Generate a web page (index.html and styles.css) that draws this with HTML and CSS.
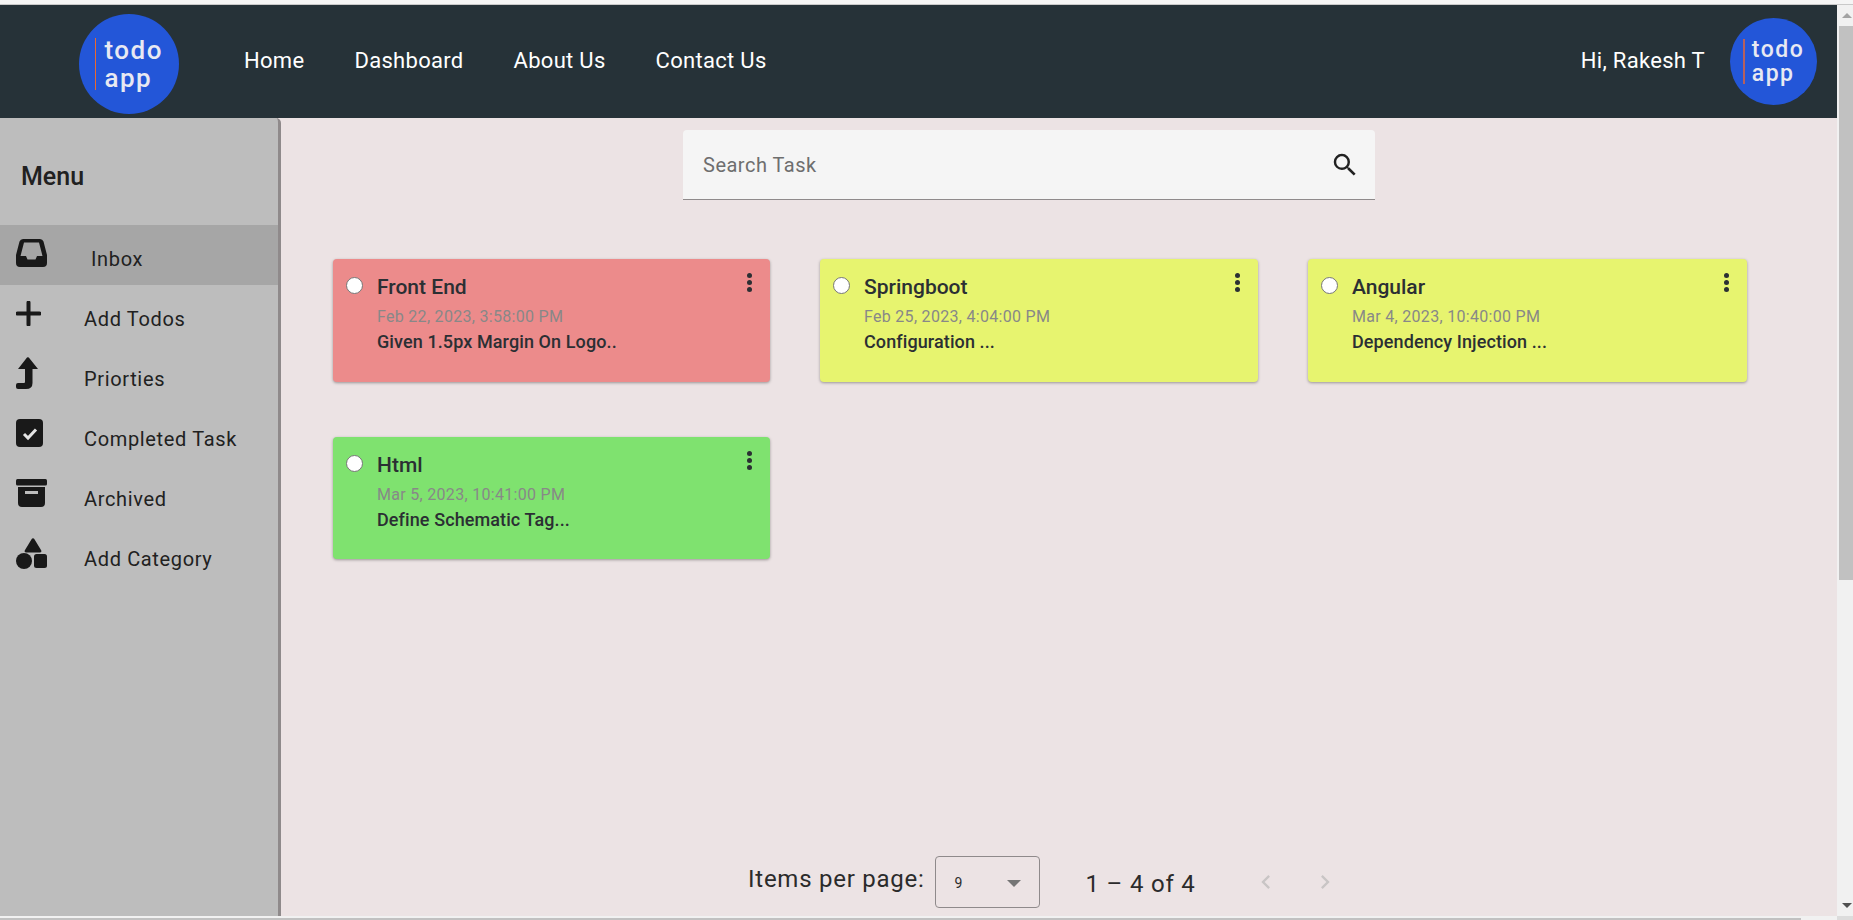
FILE: index.html
```html
<!DOCTYPE html>
<html lang="en">
<head>
  <meta charset="UTF-8">
  <meta name="viewport" content="width=device-width, initial-scale=1.0">
  <link rel="stylesheet" href="styles.css">
  <title>Todo App</title>
</head>
<body>
  <div class="window-top"></div>

  <div class="window-main">
    <div class="page">
      <header class="topbar">
        <div class="logo logo-big">
          <span class="logo-bar"></span>
          <div class="logo-text">todo<br>app</div>
        </div>
        <nav class="nav-links">
          <a>Home</a>
          <a>Dashboard</a>
          <a>About Us</a>
          <a>Contact Us</a>
        </nav>
        <span class="greeting">Hi, Rakesh T</span>
        <div class="logo logo-small">
          <span class="logo-bar"></span>
          <div class="logo-text">todo<br>app</div>
        </div>
      </header>

      <div class="layout">
        <aside class="sidebar">
          <h2 class="menu-title">Menu</h2>
          <ul class="menu-list">
            <li class="menu-item active">
              <span class="icon-slot">
                <svg class="icon-inbox" width="31" height="28" viewBox="0 0 31 28"><path fill-rule="evenodd" d="M7 0H24Q26.500 0 27.500 2.500L31 16V24Q31 28 27 28H4Q0 28 0 24V16L3.500 2.500Q4.500 0 7 0ZM8 3.500 4.500 17H10L11.500 20.500H19.500L21 17H26.500L23 3.500Z"/></svg>
              </span>
              <span class="inbox-label">Inbox</span>
            </li>
            <li class="menu-item">
              <span class="icon-slot">
                <svg class="icon-plus" width="25" height="25" viewBox="0 0 25 25"><path d="M10.500 1.500a2 2 0 0 1 4 0V10.500H23.500a2 2 0 0 1 0 4H14.500V23.500a2 2 0 0 1-4 0V14.500H1.500a2 2 0 0 1 0-4H10.500Z"/></svg>
              </span>
              <span>Add Todos</span>
            </li>
            <li class="menu-item">
              <span class="icon-slot">
                <svg class="icon-arrow" width="22" height="32" viewBox="0 0 22 32"><path d="M11 .5a1.500 1.500 0 0 1 1.800 0L22 12H16.500V26Q16.500 32 10 32H2Q0 32 0 30V28Q0 26 2 26H8Q9 26 9 25V12H2Z"/></svg>
              </span>
              <span>Priorties</span>
            </li>
            <li class="menu-item">
              <span class="icon-slot">
                <svg class="icon-check" width="27" height="28" viewBox="0 0 27 28"><rect width="27" height="28" rx="4"/><polyline points="8,15 12,19 20,10.500" fill="none" stroke="#e4e4e4" stroke-width="3"/></svg>
              </span>
              <span>Completed Task</span>
            </li>
            <li class="menu-item">
              <span class="icon-slot">
                <svg class="icon-archive" width="31" height="28" viewBox="0 0 31 28"><rect width="31" height="6.500" rx="1.500"/><path fill-rule="evenodd" d="M2 8H29V24Q29 28 25 28H6Q2 28 2 24ZM9 12V15H22V12Z"/></svg>
              </span>
              <span>Archived</span>
            </li>
            <li class="menu-item">
              <span class="icon-slot">
                <svg class="icon-shapes" width="31" height="31" viewBox="0 0 31 31"><path d="M15.700 1a1.500 1.500 0 0 1 2.600 0L25.300 12.500a1.500 1.500 0 0 1-1.300 2H10a1.500 1.500 0 0 1-1.300-2Z"/><circle cx="8" cy="23" r="8"/><rect x="18" y="16" width="13" height="14" rx="2.500"/></svg>
              </span>
              <span>Add Category</span>
            </li>
          </ul>
        </aside>

        <main class="content">
          <div class="search-box">
            <span class="search-text">Search Task</span>
            <svg class="search-icon" viewBox="0 0 24 24"><path d="M15.500 14h-.79l-.28-.27A6.470 6.470 0 0 0 16 9.500 6.500 6.500 0 1 0 9.500 16c1.610 0 3.090-.59 4.230-1.570l.27.28v.79l5 4.990L20.490 19l-4.990-5zm-6 0C7.010 14 5 11.990 5 9.500S7.010 5 9.500 5 14 7.010 14 9.500 11.990 14 9.500 14z"/></svg>
          </div>

          <div class="card-grid">
            <div class="card card-red">
              <span class="radio"></span>
              <div class="card-body">
                <div class="card-title">Front End</div>
                <div class="card-date">Feb 22, 2023, 3:58:00 PM</div>
                <div class="card-desc">Given 1.5px Margin On Logo..</div>
              </div>
              <span class="card-more"><i></i><i></i><i></i></span>
            </div>
            <div class="card card-yellow">
              <span class="radio"></span>
              <div class="card-body">
                <div class="card-title">Springboot</div>
                <div class="card-date">Feb 25, 2023, 4:04:00 PM</div>
                <div class="card-desc">Configuration ...</div>
              </div>
              <span class="card-more"><i></i><i></i><i></i></span>
            </div>
            <div class="card card-yellow">
              <span class="radio"></span>
              <div class="card-body">
                <div class="card-title">Angular</div>
                <div class="card-date">Mar 4, 2023, 10:40:00 PM</div>
                <div class="card-desc">Dependency Injection ...</div>
              </div>
              <span class="card-more"><i></i><i></i><i></i></span>
            </div>
            <div class="card card-green">
              <span class="radio"></span>
              <div class="card-body">
                <div class="card-title">Html</div>
                <div class="card-date">Mar 5, 2023, 10:41:00 PM</div>
                <div class="card-desc">Define Schematic Tag...</div>
              </div>
              <span class="card-more"><i></i><i></i><i></i></span>
            </div>
          </div>

          <div class="paginator">
            <span class="per-page">Items per page:</span>
            <div class="page-select">
              <span>9</span>
              <span class="select-arrow"></span>
            </div>
            <span class="range">1 – 4 of 4</span>
            <svg class="chev" viewBox="0 0 24 24"><path d="M15.410 7.410 14 6l-6 6 6 6 1.410-1.410L10.830 12z"/></svg>
            <svg class="chev" viewBox="0 0 24 24"><path d="M10 6 8.590 7.410 13.170 12l-4.580 4.590L10 18l6-6z"/></svg>
          </div>
        </main>
      </div>
    </div>

    <div class="scrollbar">
      <div class="scroll-btn scroll-up"></div>
      <div class="scroll-thumb"></div>
      <div class="scroll-btn scroll-down"></div>
    </div>
  </div>

  <div class="hscroll">
    <div class="hscroll-track"><div class="hscroll-thumb"></div></div>
    <div class="hscroll-corner"></div>
  </div>
</body>
</html>
```

FILE: styles.css
```css
html, body {
  height: 100%;
}

body {
  margin: 0;
  display: flex;
  flex-direction: column;
  font-family: Roboto, 'Liberation Sans', sans-serif;
  background-color: #f1f1f1;
  overflow: hidden;
}

.window-top {
  height: 4px;
  flex-shrink: 0;
  background-color: #f5f5f5;
  border-bottom: 1px solid #c9c9c9;
}

.window-main {
  flex: 1;
  min-height: 0;
  display: flex;
}

.page {
  flex: 1;
  display: flex;
  flex-direction: column;
  min-width: 0;
}

.topbar {
  height: 113px;
  flex-shrink: 0;
  display: flex;
  align-items: center;
  background-color: #263238;
  color: #fff;
  padding-left: 79px;
  padding-right: 20px;
}

.logo {
  border-radius: 50%;
  background-color: #2356d8;
  color: #e8e9f2;
  display: flex;
  align-items: center;
  justify-content: center;
  flex-shrink: 0;
}

.logo-big {
  width: 100px;
  height: 100px;
  margin-top: 5px;
  gap: 8px;
}

.logo-small {
  width: 87px;
  height: 87px;
  margin-left: 25px;
  gap: 7px;
}

.logo-bar {
  width: 1.5px;
  height: 52px;
  background-color: #e8692f;
}

.logo-small .logo-bar {
  width: 2px;
  height: 45px;
  background-color: #b5605e;
}

.logo-text {
  font-size: 26px;
  font-weight: 500;
  line-height: 28px;
  letter-spacing: 1.5px;
}

.logo-small .logo-text {
  font-size: 23px;
  line-height: 24px;
}

.nav-links {
  flex: 1;
  display: flex;
  gap: 50px;
  margin-left: 65px;
  margin-top: -2px;
  font-size: 22px;
  letter-spacing: 0.3px;
}

.greeting {
  font-size: 22px;
  letter-spacing: 0.3px;
  margin-top: -2px;
}

.layout {
  flex: 1;
  display: flex;
  min-height: 0;
  background-color: #ece3e4;
}

.sidebar {
  width: 278px;
  flex-shrink: 0;
  background-color: #bdbdbd;
  border-right: 3px solid #8f8a8b;
  border-top-right-radius: 5px;
}

.menu-title {
  margin: 0;
  height: 107px;
  box-sizing: border-box;
  padding: 9px 0 0 21px;
  display: flex;
  align-items: center;
  font-size: 25px;
  font-weight: 500;
  color: #212121;
}

.menu-list {
  list-style: none;
  margin: 0;
  padding: 0;
}

.menu-item {
  height: 60px;
  box-sizing: border-box;
  display: flex;
  align-items: center;
  padding: 7px 0 0 16px;
  font-size: 20px;
  letter-spacing: 0.65px;
  color: #212121;
}

.menu-item.active {
  background-color: #a6a6a6;
}

.inbox-label {
  margin-left: 7px;
}

/* icon tops differ a little from row to row */
.icon-slot {
  width: 68px;
  flex-shrink: 0;
  align-self: flex-start;
  display: flex;
}

.icon-slot svg {
  fill: #191919;
}

.icon-inbox { margin-top: 7px; }
.icon-plus { margin-top: 9px; }
.icon-arrow { margin-top: 5px; }
.icon-check { margin-top: 7px; }
.icon-archive { margin-top: 7px; }
.icon-shapes { margin-top: 6px; }

.content {
  flex: 1;
  min-width: 0;
  display: flex;
  flex-direction: column;
  padding: 12px 0 0 52px;
}

.search-box {
  width: 692px;
  height: 70px;
  box-sizing: border-box;
  margin-left: 350px;
  flex-shrink: 0;
  display: flex;
  align-items: center;
  justify-content: space-between;
  padding: 0 15px 0 20px;
  background-color: #f5f5f5;
  border-bottom: 1px solid #8f8a8b;
  border-radius: 4px 4px 0 0;
}

.search-text {
  font-size: 20px;
  color: #6e6e6e;
  letter-spacing: 0.5px;
}

.search-icon {
  width: 30px;
  height: 30px;
  fill: #212121;
}

.card-grid {
  display: grid;
  grid-template-columns: 437px 438px 438.500px;
  grid-template-rows: 123px 122px;
  column-gap: 50px;
  row-gap: 55px;
  margin-top: 59px;
}

.card {
  display: flex;
  align-items: flex-start;
  border-radius: 4px;
  box-shadow: 0 1px 3px rgba(0, 0, 0, 0.35);
  padding: 18px 14px 0 13px;
  box-sizing: border-box;
}

.card-red { background-color: #ec8b8b; }
.card-yellow { background-color: #e7f46f; }
.card-green { background-color: #7fe26f; }

.radio {
  width: 15px;
  height: 15px;
  flex-shrink: 0;
  border-radius: 50%;
  border: 1px solid #777;
  background-color: #fff;
}

.card-body {
  flex: 1;
  margin-left: 14px;
}

.card-title {
  font-size: 21px;
  font-weight: 500;
  line-height: 21px;
  color: #2b2f33;
}

.card-date {
  font-size: 16px;
  letter-spacing: 0.3px;
  line-height: 18px;
  margin-top: 10px;
  color: #888;
}

.card-desc {
  font-size: 18px;
  font-weight: 500;
  letter-spacing: 0.1px;
  line-height: 18px;
  margin-top: 7px;
  color: #2b2f33;
}

.card-more {
  display: flex;
  flex-direction: column;
  gap: 2px;
  margin-top: -4px;
  margin-right: 4px;
}

.card-more i {
  width: 5px;
  height: 5px;
  border-radius: 50%;
  background-color: #2b2f33;
}

.paginator {
  margin-top: auto;
  margin-bottom: 8px;
  display: flex;
  align-items: center;
  padding-left: 415px;
  color: #2b2b2b;
}

.per-page {
  font-size: 24px;
  letter-spacing: 0.75px;
  margin-top: -6px;
}

.page-select {
  width: 105px;
  height: 52px;
  box-sizing: border-box;
  margin-left: 10px;
  padding: 2px 18px 0 19px;
  display: flex;
  align-items: center;
  justify-content: space-between;
  border: 1px solid #8f8a8b;
  border-radius: 4px;
  font-size: 14px;
}

.select-arrow {
  width: 0;
  height: 0;
  border-left: 7px solid transparent;
  border-right: 7px solid transparent;
  border-top: 7px solid #757575;
}

.range {
  font-size: 24px;
  letter-spacing: 0.8px;
  margin: 4px 56px 0 46px;
}

.chev {
  width: 28px;
  height: 28px;
  margin-right: 31px;
  fill: #c9c5c5;
}

.scrollbar {
  width: 16px;
  flex-shrink: 0;
  background-color: #f1f1f1;
  display: flex;
  flex-direction: column;
}

.scroll-btn {
  height: 21px;
  flex-shrink: 0;
  display: flex;
  align-items: center;
  justify-content: center;
  padding-left: 4px;
}

.scroll-up::before {
  content: "";
  border-left: 5px solid transparent;
  border-right: 5px solid transparent;
  border-bottom: 5px solid #a3a3a3;
}

.scroll-down {
  margin-top: auto;
}

.scroll-down::before {
  content: "";
  border-left: 5px solid transparent;
  border-right: 5px solid transparent;
  border-top: 5px solid #505050;
}

.scroll-thumb {
  height: 554px;
  margin-left: 2px;
  background-color: #c1c1c1;
}

.hscroll {
  height: 4px;
  flex-shrink: 0;
  display: flex;
}

.hscroll-track {
  flex: 1;
  padding-top: 2px;
  background-color: #f1f1f1;
}

.hscroll-thumb {
  width: 1801px;
  height: 2px;
  background-color: #c1c1c1;
}

.hscroll-corner {
  width: 16px;
  background-color: #dcdcdc;
}
```
